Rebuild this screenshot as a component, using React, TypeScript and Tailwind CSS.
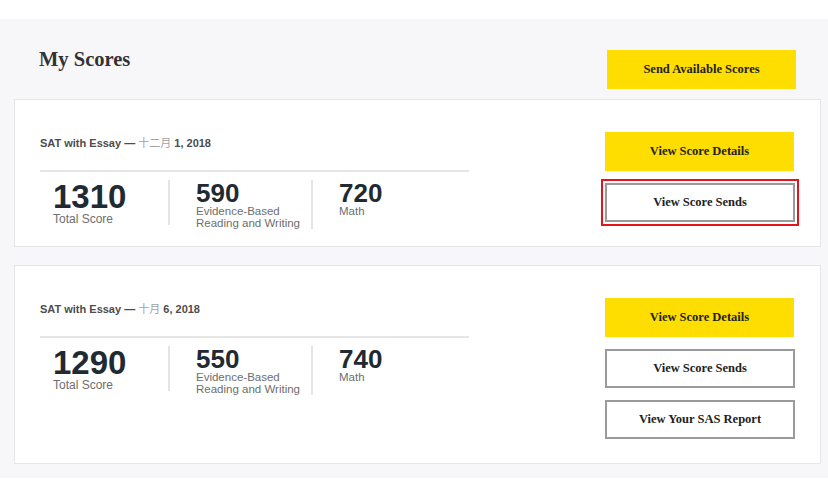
const slab = "font-['Liberation_Serif',serif] font-bold text-[#222]";
const sans = "font-['Liberation_Sans',Arial,'Noto_Sans_CJK_SC',sans-serif]";

type Exam = {
  month: string;
  day: string;
  total: number;
  ebrw: number;
  math: number;
  sas?: boolean;
  highlight?: boolean;
};

const exams: Exam[] = [
  { month: "十二月", day: "1, 2018", total: 1310, ebrw: 590, math: 720, highlight: true },
  { month: "十月", day: "6, 2018", total: 1290, ebrw: 550, math: 740, sas: true },
];

function YellowButton({ label }: { label: string }) {
  return (
    <button className={`h-[39px] w-[189px] bg-[#fedd00] text-[12.5px] ${slab}`}>
      {label}
    </button>
  );
}

function OutlineButton({ label, highlight }: { label: string; highlight?: boolean }) {
  return (
    <button
      className={`h-[39px] w-[190px] border-2 border-[#9a9a9a] bg-white text-[12.5px] ${slab} ${
        highlight ? "outline-2 outline-[#e8121b] outline-offset-[2px]" : ""
      }`}
    >
      {label}
    </button>
  );
}

function ScoreCard({ exam }: { exam: Exam }) {
  return (
    <div className="flex items-start justify-between border border-[#e6e6e6] bg-white pl-[25px] pr-[25px] pt-[32px]">
      <div className={`mt-[3px] w-[429px] ${sans}`}>
        <div className="text-[11px] leading-[16px] font-bold text-[#4d4d4d]">
          SAT with Essay — <span className="font-normal text-[#a3a3a3]">{exam.month}</span> {exam.day}
        </div>
        <div className="mt-[19px] border-t-2 border-[#e6e6e6]" />
        <div className="mt-[8px] flex items-start">
          <div className="w-[130px] border-r-2 border-[#e4e4e4] pl-[13px]">
            <div className="text-[33px] leading-[33px] font-bold text-[#1f2a33]">{exam.total}</div>
            <div className="text-[12px] leading-[12px] text-[#6e6e6e]">Total Score</div>
          </div>
          <div className="w-[143px] border-r-2 border-[#e4e4e4] pl-[26px]">
            <div className="text-[26px] leading-[26px] font-bold text-[#1f2a33]">{exam.ebrw}</div>
            <div className="text-[11.5px] leading-[11.5px] text-[#6e6e6e]">
              Evidence-Based
              <br />
              Reading and Writing
            </div>
          </div>
          <div className="pl-[26px]">
            <div className="text-[26px] leading-[26px] font-bold text-[#1f2a33]">{exam.math}</div>
            <div className="text-[11.5px] leading-[11.5px] text-[#6e6e6e]">Math</div>
          </div>
        </div>
      </div>
      <div className="flex flex-col gap-[12px] pb-[24px]">
        <YellowButton label="View Score Details" />
        <OutlineButton label="View Score Sends" highlight={exam.highlight} />
        {exam.sas && <OutlineButton label="View Your SAS Report" />}
      </div>
    </div>
  );
}

export default function App() {
  return (
    <div className="h-[500px] w-[828px] bg-white">
      <div className="mt-[19px] bg-[#f7f7f9] pl-[14px] pr-[7px] pb-[14px]">
        <div className="flex items-start justify-between pl-[25px] pr-[25px] pt-[31px] pb-[10px]">
          <h1 className={`-mt-[1px] text-[20.5px] leading-[20px] ${slab} text-[#333]`}>My Scores</h1>
          <YellowButton label="Send Available Scores" />
        </div>
        <div className="flex flex-col gap-[18px]">
          {exams.map((e) => (
            <ScoreCard key={e.month} exam={e} />
          ))}
        </div>
      </div>
    </div>
  );
}
